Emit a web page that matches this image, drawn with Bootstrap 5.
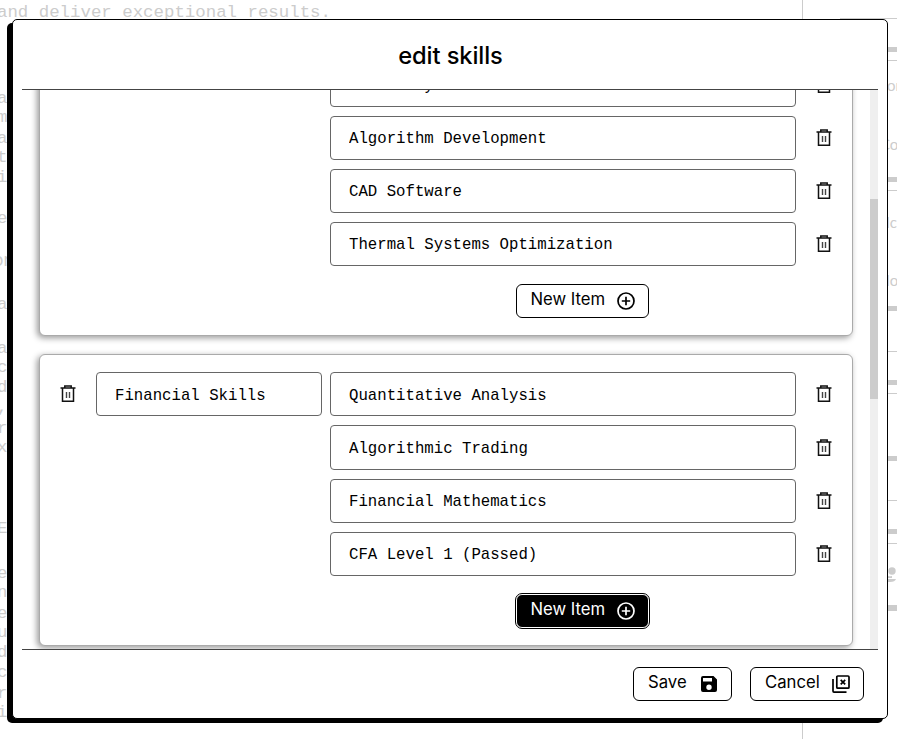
<!DOCTYPE html>
<html lang="en">
<head>
<meta charset="utf-8">
<meta name="viewport" content="width=device-width, initial-scale=1">
<title>edit skills</title>
<link href="https://cdn.jsdelivr.net/npm/bootstrap@5.3.0/dist/css/bootstrap.min.css" rel="stylesheet">
<style>
html,body{height:100%;overflow:hidden}
body{background:#fff;color:#000;font-family:Lato,"Open Sans",sans-serif}
.mono{font-family:"Liberation Mono",monospace}
/* dimmed page behind the dialog */
.backpage{height:739px;color:#ccc;overflow:hidden}
.resume{width:803px;border-right:1px solid #ccc;font-size:17.4px;line-height:20px;overflow:hidden;white-space:pre}
.resume div{height:20px;margin-left:-3px}
.resume .heading-line{margin-left:-7px;font-family:Inter,sans-serif}
.side{width:94px;font-size:15px;line-height:20px;white-space:nowrap}
.side svg{display:block}
/* dialog */
.dlg-wrap{position:absolute;left:12px;top:19px;width:876px;height:700px}
.dlg{height:100%;background:#fff;border:1px solid #000;border-radius:5px;box-shadow:-5px 4px 0 #000;padding:0 9px}
.dlg-head{height:69px;padding-top:1px}
.dlg-head h1{font:500 23.7px Inter,sans-serif;letter-spacing:-.1px;margin:0 0 0 1px}
.dlg-body{height:561px;border-top:1px solid #444;border-bottom:1px solid #444;overflow:hidden}
.groups{padding:0 17px 3px;gap:18px;overflow:hidden}
.group-card{border:1px solid #aaa;border-radius:6px;background:#fff;box-shadow:-2px 2px 6px rgba(0,0,0,.4);padding:17px 0;flex:none}
.label-col{width:290px}
.del{width:56px}
.del svg{display:block}
.field,.field:focus{height:44.2px;border:1px solid #666;border-radius:4px;padding:2.4px 18px 0;font-size:15.7px;color:#000;box-shadow:none;background:#fff}
.field-name{width:226px}
.field-item{width:466px}
.items{gap:9px}
.add-row{padding:9px 18px 0 0}
.act{height:34px;border:1px solid #000;border-radius:6px;background:#fff;color:#000;font:400 16.7px Inter,sans-serif;letter-spacing:0;padding:0 12px 0 14px}
.act span{margin-bottom:4px}
.act.active-now{background:#000;color:#fff;border-color:#fff;outline:1px solid #000}
.new-item{width:133px}
.save{width:99px}
.cancel{width:114px}
.track{width:8px;background:#efefef}
.thumb{height:200px;margin-top:109px;background:#ccc}
.dlg-foot{height:67px;padding-right:14px;gap:18px}
</style>
</head>
<body>
<svg width="0" height="0" class="position-absolute" aria-hidden="true">
<symbol id="trash" viewBox="0 0 16 18"><path d="M2.5 3.5V16.2h11V3.5M.5 3.1h15M4.8 2.7V1h6.4v1.7" fill="none" stroke="#111" stroke-width="1.5"/><path d="M6.5 7v6M9.5 7v6" stroke="#444" stroke-width="1.4"/></symbol>
<symbol id="plus" viewBox="0 0 20 20"><circle cx="10" cy="10" r="8" fill="none" stroke="currentColor" stroke-width="1.7"/><path d="M10 5.8v8.4M5.8 10h8.4" stroke="currentColor" stroke-width="1.7"/></symbol>
</svg>
<main class="backpage d-flex" id="page">
<div class="resume mono" id="resume"></div>
<div class="side" id="side"></div>
</main>
<div class="dlg-wrap" role="dialog" aria-label="edit skills">
<div class="dlg d-flex flex-column">
<header class="dlg-head d-flex align-items-center justify-content-center"><h1>edit skills</h1></header>
<div class="dlg-body d-flex">
<div class="groups d-flex flex-column justify-content-end flex-grow-1" id="groups"></div>
<div class="track"><div class="thumb"></div></div>
</div>
<footer class="dlg-foot d-flex align-items-center justify-content-end">
<button class="act save d-flex align-items-center justify-content-between"><span>Save</span><svg width="20" height="20" viewBox="0 0 20 20"><path fill="#000" fill-rule="evenodd" d="M4 2h10.5L18 5.5V16a2 2 0 0 1-2 2H4a2 2 0 0 1-2-2V4a2 2 0 0 1 2-2zM4 4v3.6h9V4zM10 10.6a2.7 2.7 0 1 0 0 5.4 2.7 2.7 0 0 0 0-5.4z"/></svg></button>
<button class="act cancel d-flex align-items-center justify-content-between"><span>Cancel</span><svg width="20" height="20" viewBox="0 0 20 20" fill="none" stroke="#000"><rect x="5.8" y="2" width="12.2" height="12.2" rx="1" stroke-width="1.7"/><path d="M2 5v12.1a1 1 0 0 0 1 1H15.5" stroke-width="1.7"/><path d="M9.7 5.9l4.5 4.5M14.2 5.9l-4.5 4.5" stroke-width="1.7"/></svg></button>
</footer>
</div>
</div>
<script>
const trash = '<svg width="16" height="18"><use href="#trash"/></svg>';
const groups = [
  {name:'', items:['Machinery','Algorithm Development','CAD Software','Thermal Systems Optimization'], hot:false},
  {name:'Financial Skills', items:['Quantitative Analysis','Algorithmic Trading','Financial Mathematics','CFA Level 1 (Passed)'], hot:true}
];
// the first group is scrolled past its top, so an extra row keeps its upper edge out of view
groups[0].items.unshift('');
document.getElementById('groups').innerHTML = groups.map(g => `
<section class="group-card d-flex">
  <div class="label-col d-flex align-items-start">${g.name ? `
    <div class="d-flex align-items-center"><div class="del d-flex justify-content-center">${trash}</div><input class="form-control field field-name mono" value="${g.name}"></div>` : ''}</div>
  <div class="items d-flex flex-column">
    ${g.items.map(t => `<div class="d-flex align-items-center"><input class="form-control field field-item mono" value="${t}"><div class="del d-flex justify-content-center">${trash}</div></div>`).join('')}
    <div class="add-row d-flex"><button class="act new-item d-flex align-items-center justify-content-between mx-auto${g.hot ? ' active-now' : ''}"><span>New Item</span><svg width="20" height="20"><use href="#plus"/></svg></button></div>
  </div>
</section>`).join('');

// [vertical centre, text] for each line of the page copy
const lines = [[-7,' '.repeat(8) + 'p' + ' '.repeat(56) + 'g'],[13,'and deliver exceptional results.'],[99,'a'],[118,'m'],[139,'a'],[158,'t'],[178,'i'],[219,'e'],[260,'or'],[305,'a'],[349,'a'],[368,'c'],[388,'d'],[408,','],[429,'r'],[448,'x'],[529,'E'],[574,'e'],[593,'n'],[614,'e'],[633,'u'],[653,'d'],[673,'c'],[694,'r'],[713,'i']];
let y = 0;
document.getElementById('resume').innerHTML = lines.map(([c,t]) => {
  const gap = c - 10 - y; y = c + 10;
  return `<div class="${t === 'or' ? 'heading-line' : ''}" style="margin-top:${gap}px">${t}</div>`;
}).join('');

// [top, height, label, indent] for the side panel: rules, bars and labels
const side = [[18,1,'',37],[47,5],[60,1],[75,20,'or',84],[134,20,'Co',77],[177,5],[190,1],[212,20,'Mc',73],[270,20,'Mo',73],[306,5],[351,1],[380,5],[393,1],[456,5],[500,1],[529,5],[543,1],[567,15,'*',0],[605,6]];
y = 0;
document.getElementById('side').innerHTML = side.map(([top,h,t,x = 37]) => {
  const gap = top - y; y = top + h;
  const body = t === '*' ? '<svg width="94" height="15" fill="#ccc"><circle cx="89" cy="4" r="3.7"/><path d="M82 8q3 2 7 1v2h-7zM81 12h12q-1 3-6 3h-6z"/></svg>' : (t || '');
  return `<div style="margin-top:${gap}px;height:${h}px;margin-left:${x}px;background:${t ? 'none' : '#ccc'}">${body}</div>`;
}).join('');
</script>
<script src="https://cdn.jsdelivr.net/npm/bootstrap@5.3.0/dist/js/bootstrap.bundle.min.js"></script>
</body>
</html>
